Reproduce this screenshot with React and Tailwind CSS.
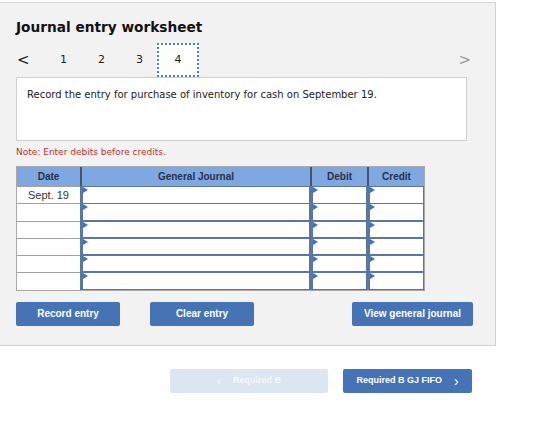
import React from "react";

const rows = ["Sept. 19", "", "", "", "", ""];

function Flag() {
  return (
    <svg className="absolute left-0 top-0" width="5" height="6" viewBox="0 0 5 6">
      <path d="M0 0 L5 3 L0 6 Z" fill="#3d72c4" />
    </svg>
  );
}

function InputCell() {
  return (
    <div className="relative h-full border border-[#5a76a3] bg-white">
      <Flag />
    </div>
  );
}

export default function App() {
  return (
    <div className="relative w-[560px] h-[431px] bg-white font-['DejaVu_Sans',Verdana,sans-serif] text-[#222]">
      <div className="mt-[2px] w-[496px] h-[344px] border border-[#d3d3d3] border-l-0 bg-[#f2f2f2] pl-4 pt-[14px]">
        <h1 className="text-[13.7px] font-bold leading-[20px] text-[#111]">Journal entry worksheet</h1>

        <div className="relative mt-[6px] flex h-[34px] w-[450px] items-center">
          <span className="ml-[1px] w-[36px] text-[15px] leading-none text-[#222]">&lt;</span>
          <span className="w-[38px] pl-[7px] text-[11px]">1</span>
          <span className="w-[38px] pl-[7px] text-[11px]">2</span>
          <span className="w-[20px] pl-[7px] text-[11px]">3</span>
          <div className="ml-[8px] flex h-[34px] w-[42px] items-center justify-center border-2 border-dotted border-[#4b7cc8] bg-white text-[11px]">
            4
          </div>
          <span className="ml-auto mr-[-5px] text-[15px] leading-none text-[#999]">&gt;</span>
        </div>

        <div className="h-[64px] w-[451px] border border-[#cfcfcf] bg-white px-[10px] pt-[9px] text-[10px] text-[#222]">
          Record the entry for purchase of inventory for cash on September 19.
        </div>

        <p className="mt-[5px] text-[9px] leading-[12px] text-[#b5352d]">Note: Enter debits before credits.</p>

        <div className="mt-[8px] w-[409px] border border-[#a9a9a9] font-['Liberation_Sans',Arial,sans-serif]">
          <div className="grid h-[19px] grid-cols-[63px_230px_57px_57px] bg-[#7ea8df] text-[10px] font-bold text-[#26324a]">
            <div className="flex items-center justify-center">Date</div>
            <div className="flex items-center justify-center border-l-2 border-[#46546b]">General Journal</div>
            <div className="flex items-center justify-center border-l-2 border-[#46546b]">Debit</div>
            <div className="flex items-center justify-center border-l-2 border-[#46546b]">Credit</div>
          </div>
          {rows.map((d, i) => (
            <div key={i} className="grid h-[17.3px] grid-cols-[63px_230px_57px_57px]">
              <div className="flex items-center justify-center border-t border-[#a0a0a0] bg-white text-[11px] text-[#333]">
                {d}
              </div>
              <div className="border-l-2 border-[#5a76a3]">
                <InputCell />
              </div>
              <div className="border-l-2 border-[#5a76a3]">
                <InputCell />
              </div>
              <div className="border-l-2 border-[#5a76a3]">
                <InputCell />
              </div>
            </div>
          ))}
        </div>

        <div className="mt-[11px] flex w-[457px] font-['Liberation_Sans',Arial,sans-serif] text-[10px] font-bold text-white">
          <button className="h-[24px] w-[104px] rounded-[2px] bg-[#4673b5]">Record entry</button>
          <button className="ml-[30px] h-[24px] w-[104px] rounded-[2px] bg-[#4673b5]">Clear entry</button>
          <button className="ml-auto h-[24px] w-[121px] rounded-[2px] bg-[#4673b5]">View general journal</button>
        </div>
      </div>

      <div className="mt-[23px] flex pl-[170px] font-['Liberation_Sans',Arial,sans-serif] text-[9px] font-bold text-white">
        <button className="flex h-[24px] w-[158px] items-center justify-center gap-[12px] rounded-[2px] bg-[#dce6f2] text-[#f4f7fb]">
          <span className="text-[12px] font-normal">&lsaquo;</span>
          <span>Required B</span>
        </button>
        <button className="ml-[15px] flex h-[24px] w-[129px] items-center justify-center gap-[12px] rounded-[2px] bg-[#4673b5]">
          <span>Required B GJ FIFO</span>
          <span className="text-[14px] font-normal">&rsaquo;</span>
        </button>
      </div>

      <div className="absolute bottom-0 left-0 h-px w-full bg-[#eeeeee]" />
    </div>
  );
}
